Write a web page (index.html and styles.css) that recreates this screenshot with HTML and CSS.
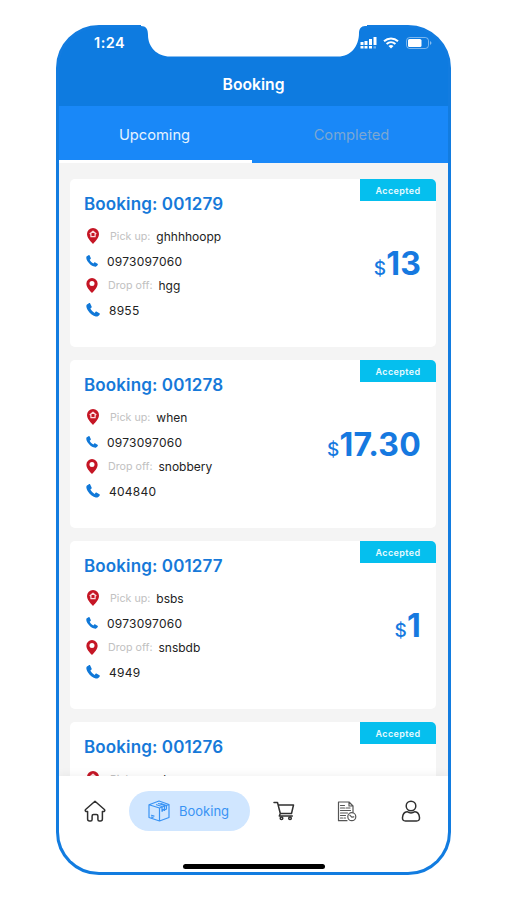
FILE: index.html
```html
<!DOCTYPE html>
<html lang="en">
<head>
<meta charset="utf-8">
<title>Booking</title>
<link rel="stylesheet" href="styles.css">
</head>
<body>
<svg class="defs" width="0" height="0">
  <symbol id="pin" viewBox="0 0 12 16"><path fill="#c51625" fill-rule="evenodd" d="M6 0a6 6 0 0 0-6 6c0 3.600 3.300 7 6 10 2.700-3 6-6.400 6-10a6 6 0 0 0-6-6Zm0 3.200a2.700 2.700 0 1 1 0 5.400 2.700 2.700 0 0 1 0-5.400Z"/></symbol>
  <symbol id="pin-home" viewBox="0 0 12 16"><path fill="#c51625" d="M6 0a6 6 0 0 0-6 6c0 3.600 3.300 7 6 10 2.700-3 6-6.400 6-10a6 6 0 0 0-6-6Z"/><path fill="none" stroke="#fbdde0" stroke-width="1.200" stroke-linejoin="round" d="M2.700 6 6 3.200 9.300 6M3.900 5.500v3.200h4.200V5.500"/></symbol>
  <symbol id="phone" viewBox="0 0 12 12"><path fill="#1078d8" d="M2.500.2.800 1.300C-.1 2 .2 4.200 1.700 6.400c1.700 2.600 4.400 4.700 6.700 5.200 1.300.3 2.300-.3 3.300-1.700.3-.4.200-.8-.2-1.100L9.300 7.500c-.4-.3-.8-.2-1.100.1l-.8.900C5.900 7.800 4.500 6.400 3.700 4.800l.9-.8c.3-.3.4-.7.2-1.100L3.600.5C3.400 0 2.900 0 2.500.2Z"/></symbol>
</svg>
<div class="device">
<div class="phone">
  <header class="top">
    <div class="status">
      <span class="time">1:24</span>
      <div class="signals">
        <svg width="17" height="12" viewBox="0 0 17 12" fill="#fff"><path d="M.5 5h3v3h-3zM4.500 4h3v4h-3zM9 2h3v6H9zM13.500 0H16.500v8h-3zM.5 9h3v2.500h-3zM4.500 9h3v2.500h-3zM9 9h3v2.500H9z"/><path opacity=".4" d="M13.500 9.300h2.500v2.200h-2.500z"/></svg>
        <svg width="16" height="12" viewBox="0 0 16 12"><path fill="none" stroke="#fff" stroke-width="2" d="M1 4.300c4-3.700 10-3.700 14 0M3.600 7c2.600-2.300 6.200-2.300 8.800 0"/><path fill="#fff" d="m8 11.500-2.500-2.600q2.500-1.800 5 0Z"/></svg>
        <svg width="26" height="12" viewBox="0 0 26 12"><rect x=".5" y=".5" width="22" height="11" rx="3.200" fill="none" stroke="#fff" stroke-opacity=".45"/><rect x="2" y="2" width="13.500" height="8" rx="1.500" fill="#fff"/><path fill="#fff" opacity=".5" d="M24 4q3 2 0 4z"/></svg>
      </div>
    </div>
    <h1>Booking</h1>
  </header>
  <nav class="tabs"><div class="tab active"><span>Upcoming</span></div><div class="tab"><span>Completed</span></div></nav>
  <main class="list">
    <article class="card">
      <div class="info"><h2>Booking: 001279</h2>
        <div class="row pickup"><svg><use href="#pin-home"/></svg><label>Pick up:</label><b>ghhhhoopp</b></div>
        <div class="row call"><svg><use href="#phone"/></svg><b>0973097060</b></div>
        <div class="row dropoff"><svg><use href="#pin"/></svg><label>Drop off:</label><b>hgg</b></div>
        <div class="row call large"><svg><use href="#phone"/></svg><b>8955</b></div>
      </div>
      <div class="side"><span class="badge">Accepted</span><p class="price"><small>$</small>13</p></div>
    </article>
    <article class="card">
      <div class="info"><h2>Booking: 001278</h2>
        <div class="row pickup"><svg><use href="#pin-home"/></svg><label>Pick up:</label><b>when</b></div>
        <div class="row call"><svg><use href="#phone"/></svg><b>0973097060</b></div>
        <div class="row dropoff"><svg><use href="#pin"/></svg><label>Drop off:</label><b>snobbery</b></div>
        <div class="row call large"><svg><use href="#phone"/></svg><b>404840</b></div>
      </div>
      <div class="side"><span class="badge">Accepted</span><p class="price"><small>$</small>17.30</p></div>
    </article>
    <article class="card">
      <div class="info"><h2>Booking: 001277</h2>
        <div class="row pickup"><svg><use href="#pin-home"/></svg><label>Pick up:</label><b>bsbs</b></div>
        <div class="row call"><svg><use href="#phone"/></svg><b>0973097060</b></div>
        <div class="row dropoff"><svg><use href="#pin"/></svg><label>Drop off:</label><b>snsbdb</b></div>
        <div class="row call large"><svg><use href="#phone"/></svg><b>4949</b></div>
      </div>
      <div class="side"><span class="badge">Accepted</span><p class="price"><small>$</small>1</p></div>
    </article>
    <article class="card">
      <div class="info"><h2>Booking: 001276</h2>
        <div class="row pickup"><svg><use href="#pin-home"/></svg><label>Pick up:</label><b>vhs</b></div>
      </div>
      <div class="side"><span class="badge">Accepted</span></div>
    </article>
  </main>
  <footer class="bottom">
    <nav class="menu">
      <a class="home"><svg width="22" height="22" viewBox="0 0 22 22"><path d="M3.600 11.500H2q-1.400-.6-.4-2L11 1.200l9.400 8.300q1 1.400-.4 2h-1.600V19q0 2-2 2h-1q-1.500 0-1.500-1.500V16q0-1.500-1.500-1.500H9.600q-1.500 0-1.500 1.500v3.500Q8.100 21 6.600 21h-1q-2 0-2-2Z"/></svg></a>
      <a class="current"><svg width="22" height="22" viewBox="0 0 22 22"><path d="M1 4.800 11 1l10 3.500v13L11.500 21 1 17.500ZM1 4.800 11.500 8 21 4.500M11.500 8v13M3.500 15.300l2.500.8M3.500 17l1.500.5"/><path d="m10.500 3.500 6 2v5l-1.200-1.200-1.300 2V6.500L8.500 4.700M13 3.500l5.500 2v3.500l-2 1"/></svg><span>Booking</span></a>
      <a class="cart"><svg width="22" height="20" viewBox="0 0 22 20"><path d="M1 1.500h3.500L7.300 12.500 6.300 15h13M5 4h15.500l-2 8.500H7.300"/><circle cx="8.500" cy="17.200" r="1.300"/><circle cx="17" cy="17.200" r="1.300"/></svg></a>
      <a class="history"><svg width="20" height="21" viewBox="0 0 20 21"><path d="M10 19.700H1.500V1H12l4 4v6M12 1v4h4M3.500 4.500h4M3.500 7h4M9 7h4M3.500 9.500h10M3.500 12h7M3.500 14.500h5M3.500 17h2M7 17h1.500"/><circle cx="14.800" cy="15.700" r="4"/><path d="m12.800 14.200 2 2 2-.3"/></svg></a>
      <a class="profile"><svg width="20" height="22" viewBox="0 0 20 22"><circle cx="10" cy="6" r="4.800"/><path d="M6 11.700q-4 .3-4.500 5.800-.3 3.500 3 3.500h11q3.300 0 3-3.500-.5-5.500-4.500-5.800-4 2.500-8 0Z"/></svg></a>
    </nav>
    <div class="handle"></div>
  </footer>
</div>
<svg class="notch" width="226" height="32" viewBox="0 0 226 32"><path fill="#fff" d="M0 0h226v1h-2c-4 0-6 3-6 7 0 13-8 23.500-21 23.500H29C16 31.500 7 22 7 10 7 4 5 1 0 1Z"/></svg>
</div>
</body>
</html>
```
FILE: styles.css
```css
* { box-sizing: border-box; }
body { margin: 0; background: #fff; font-family: Inter, "Liberation Sans", sans-serif; }
.defs { display: block; }
h1, h2, p { margin: 0; }
.device { position: relative; width: 395px; margin: 25px 0 0 56px; }
.phone { height: 850px; border: 3px solid #127ce0; border-radius: 43px; overflow: hidden; display: flex; flex-direction: column; background: #127ce0; }
.notch { position: absolute; left: 85px; top: 0; }
.top { height: 78px; flex: none; background: #0e7be0; color: #fff; }
.status { display: flex; justify-content: space-between; height: 31px; padding: 6px 16px 0 35px; }
.time { font-size: 14.500px; font-weight: 600; line-height: 18px; letter-spacing: .5px; }
.signals { display: flex; gap: 7px; padding-top: 3px; }
.signals svg:first-child { margin-right: -1px; }
h1 { font-size: 15.700px; font-weight: 600; line-height: 20px; text-align: center; padding-top: 16px; }
.tabs { display: flex; height: 57px; flex: none; background: #1988f8; }
.tab { flex: 1; display: flex; align-items: center; justify-content: center; font-size: 14.700px; color: #7ba7d3; padding-left: 3px; }
.tab.active { flex: none; width: 193px; color: #e5f3ff; border-bottom: 3px solid #fff; padding: 3px 2px 0 0; }
.list { flex: 1; min-height: 0; overflow: hidden; display: flex; flex-direction: column; gap: 13px; padding: 16px 12px 0 11px; background: #f4f4f4; }
.card { height: 168px; flex: none; display: flex; justify-content: space-between; background: #fff; border-radius: 5px; overflow: hidden; }
.info { padding: 14px 0 0 14px; }
h2 { font-size: 17px; line-height: 22px; font-weight: 600; letter-spacing: .12px; color: #1679d9; white-space: nowrap; margin-bottom: 9px; }
.row { display: flex; align-items: center; height: 24.700px; font-size: 12px; color: #222; }
.row b { font-weight: 400; }
.row label { color: #c1c1c1; font-size: 10.700px; }
.row svg { width: 12px; height: 16px; flex: none; margin-left: 3px; }
.pickup label { margin: 0 6px 0 11px; }
.row.dropoff svg { width: 12px; height: 15px; margin-left: 2px; }
.dropoff label { margin: 0 6px 0 10px; }
.row.call b { letter-spacing: .25px; }
.row.call svg { width: 12px; height: 12px; margin-right: 9px; margin-left: 2px; }
.row.call.large svg { width: 14px; height: 14px; }
.side { display: flex; flex-direction: column; align-items: flex-end; }
.badge { width: 76px; height: 22px; background: #05bfee; color: #e7faff; font-size: 9px; font-weight: 600; line-height: 23px; text-align: center; letter-spacing: .4px; }
.price { margin: 43px 15px 0 0; font-size: 32px; line-height: 39px; font-weight: 700; color: #1679e0; white-space: nowrap; letter-spacing: .2px; }
.price small { font-size: 19px; font-weight: 500; }
.bottom { position: relative; height: 96px; flex: none; background: #fff; box-shadow: 0 -2px 8px #0000000d; display: flex; flex-direction: column; align-items: center; }
.menu { display: flex; align-items: center; width: 100%; height: 40px; margin-top: 15px; padding-left: 25px; }
.menu a { display: flex; align-items: center; }
.menu svg { fill: none; stroke: #303030; stroke-width: 1.500; stroke-linejoin: round; stroke-linecap: round; }
.menu .current { width: 121px; height: 40px; margin: 0 23px; border-radius: 20px; background: #d0e6ff; color: #3993f4; font-size: 13px; padding-left: 19px; gap: 9px; }
.menu .current svg { stroke: #3993f4; stroke-width: 1.200; }
.menu .history { margin: 0 44px 0 42px; }
.menu .history svg { stroke: #555; stroke-width: 1.200; }
.handle { width: 142px; height: 5px; margin-top: 33px; border-radius: 3px; background: #000; }
```
